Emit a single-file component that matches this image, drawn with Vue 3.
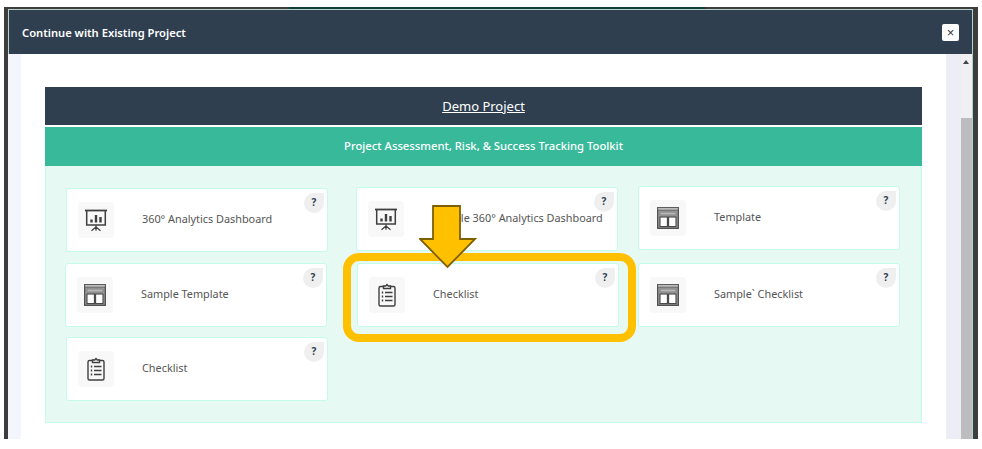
<script setup>
const cards = [
  { title: "360° Analytics Dashboard", icon: "chart" },
  { title: "Sample 360° Analytics Dashboard", icon: "chart" },
  { title: "Template", icon: "template" },
  { title: "Sample Template", icon: "template" },
  { title: "Checklist", icon: "list" },
  { title: "Sample` Checklist", icon: "template" },
  { title: "Checklist", icon: "list" },
];
</script>

<template>
  <main class="frame">
    <div class="modal">
      <span class="behind-band"></span>
      <header class="modal-head">
        <h1>Continue with Existing Project</h1>
        <button class="close" type="button">×</button>
      </header>
      <div class="modal-body">
        <div class="content">
          <h2 class="project">Demo Project</h2>
          <h3 class="toolkit">Project Assessment, Risk, &amp; Success Tracking Toolkit</h3>
          <div class="panel">
            <div v-for="(card, i) in cards" :key="i" class="card">
              <span class="icon">
                <svg v-if="card.icon === 'chart'" viewBox="0 0 24 24" width="24" height="24" fill="none" stroke="#3f3f3f" stroke-width="1.5">
                  <path d="M1 2.5h22" stroke-width="1.8" />
                  <path d="M2.7 3v14h18.6V3" />
                  <path d="M12 17v2.5M12 19l-4.5 3.8M12 19l4.5 3.8M12 19v3.8" stroke-width="1.2" />
                  <path d="M7.5 14.5v-3M12 14.5V7M16.5 14.5V9" stroke-width="2.4" />
                </svg>
                <svg v-else-if="card.icon === 'template'" viewBox="0 0 24 24" width="24" height="24" fill="none" stroke="#4a4a4a" stroke-width="1.3">
                  <rect x="1.7" y="1.7" width="20.6" height="20.6" fill="#a2a2a2" />
                  <rect x="1.7" y="1.7" width="20.6" height="2.4" fill="#cfcfcf" stroke="#555" stroke-width="0.9" />
                  <rect x="4" y="6" width="16" height="3" fill="#b8b8b8" stroke="#777" stroke-width="0.8" />
                  <rect x="4" y="11" width="7.4" height="9.6" fill="#fff" stroke="#444" stroke-width="1.1" />
                  <rect x="12.6" y="11" width="7.4" height="9.6" fill="#fff" stroke="#444" stroke-width="1.1" />
                </svg>
                <svg v-else viewBox="0 0 24 24" width="24" height="24" fill="none" stroke="#3f3f3f" stroke-width="1.4">
                  <rect x="4" y="3.5" width="16" height="19.5" rx="1.5" />
                  <path d="M8.5 5.5V3h2.3l1.2-1.5L13.2 3h2.3v2.5z" fill="#fff" />
                  <path d="M6.8 9.5h1.4M6.8 13.5h1.4M6.8 17.5h1.4" stroke-width="1.8" />
                  <path d="M10 9.5h7.5M10 13.5h7.5M10 17.5h7.5" />
                </svg>
              </span>
              <span class="title">{{ card.title }}</span>
              <span class="help">?</span>
            </div>
            <div class="highlight"></div>
            <svg class="arrow" viewBox="0 0 58 64" width="58" height="64">
              <path d="M14 1h27v33h15L28.5 62 1 34h13z" fill="#ffc000" stroke="#7f6000" stroke-width="1.8" />
            </svg>
          </div>
        </div>
      </div>
      <div class="scrollbar">
        <span class="scroll-up"></span>
        <span class="thumb"></span>
      </div>
    </div>
  </main>
</template>

<style>
html,
body {
  margin: 0;
  background: #fff;
}
</style>

<style scoped>
.frame {
  width: 982px;
  height: 449px;
  padding: 7px 4px 0;
  box-sizing: border-box;
  font-family: "Noto Sans", sans-serif;
}
/* page behind the modal, showing along its top edge */
.behind-band {
  position: absolute;
  left: 281px;
  top: -2px;
  width: 416px;
  height: 2px;
  background: #0f3d38;
}
.modal {
  position: relative;
  display: grid;
  grid-template-columns: 1fr 12px;
  grid-template-rows: 45px 1fr;
  width: 974px;
  height: 432px;
  box-sizing: border-box;
  border-style: solid;
  border-color: #3d3d3d;
  border-width: 2px 5px 0 4px;
  background: #fff;
}
.modal-head {
  grid-column: 1 / 3;
  display: flex;
  align-items: center;
  justify-content: space-between;
  padding: 1px 13px 0 13px;
  box-sizing: border-box;
  border: 1px solid #b6d2ca;
  border-bottom: 0;
  background: #2f3f50;
  color: #fff;
}
.modal-head h1 {
  margin: 0;
  font-size: 11.2px;
  font-weight: 600;
}
.close {
  width: 17px;
  height: 17px;
  padding: 0;
  border: 0;
  border-radius: 2px;
  background: #fff;
  color: #333;
  font-size: 13px;
  line-height: 17px;
}
.modal-body {
  padding: 33px 24px 0 37px;
  background: linear-gradient(90deg, #f5f5fd 13px, #fff 13px);
  border-right: 15px solid #ecedf5;
}
.content {
  width: 877px;
}
.project {
  margin: 0 0 2px;
  height: 38px;
  line-height: 38px;
  background: #2f3f50;
  color: #fff;
  font-size: 13px;
  font-weight: 400;
  text-align: center;
  text-decoration: underline;
}
.toolkit {
  margin: 0;
  height: 39px;
  line-height: 37px;
  background: #37b99a;
  color: #fff;
  font-size: 11.25px;
  font-weight: 500;
  text-align: center;
}
.panel {
  position: relative;
  display: grid;
  grid-template-columns: 290px 282px 263px;
  grid-template-rows: 76px 74px 64px;
  height: 257px;
  padding: 21px 0 0 20px;
  box-sizing: border-box;
  border: 1px solid #c3fce8;
  border-top: 0;
  background: #e7f9f3;
}
.card {
  position: relative;
  display: flex;
  align-items: center;
  width: 262px;
  height: 64px;
  padding-left: 11px;
  box-sizing: border-box;
  border: 1px solid #c3fce8;
  border-radius: 3px;
  background: #fff;
}
.card:nth-child(1) {
  margin-top: 1px;
}
.card:nth-child(3) {
  margin-top: -1px;
}
.card:nth-child(4) {
  margin-left: -1px;
}
.card:nth-child(5) {
  margin-left: 1px;
}
.icon {
  display: flex;
  align-items: center;
  justify-content: center;
  flex: none;
  width: 36px;
  height: 36px;
  border-radius: 4px;
  background: #f8f8f8;
}
.title {
  margin: 0 0 3px 28px;
  color: #555;
  font-size: 10.85px;
}
.help {
  position: absolute;
  top: 4px;
  right: 3px;
  width: 20px;
  height: 20px;
  border-radius: 50% 0 50% 50%;
  background: #efefef;
  color: #2f3f50;
  font-size: 10px;
  font-weight: 700;
  line-height: 18px;
  text-align: center;
}
.highlight {
  position: absolute;
  left: 297px;
  top: 87px;
  width: 293px;
  height: 89px;
  box-sizing: border-box;
  border: 8px solid #ffc000;
  border-radius: 16px;
}
.arrow {
  position: absolute;
  left: 373px;
  top: 39px;
}
.scrollbar {
  grid-column: 2;
  grid-row: 2;
  position: relative;
  background: #f0f0f0;
  border-right: 1px solid #a8d8cc;
}
.scroll-up {
  position: absolute;
  left: 2px;
  top: 6px;
  border: 3px solid transparent;
  border-top: 0;
  border-bottom: 4px solid #444;
}
.thumb {
  position: absolute;
  left: 0;
  right: 0;
  top: 64px;
  bottom: 0;
  background: #bdbdbd;
}
</style>
